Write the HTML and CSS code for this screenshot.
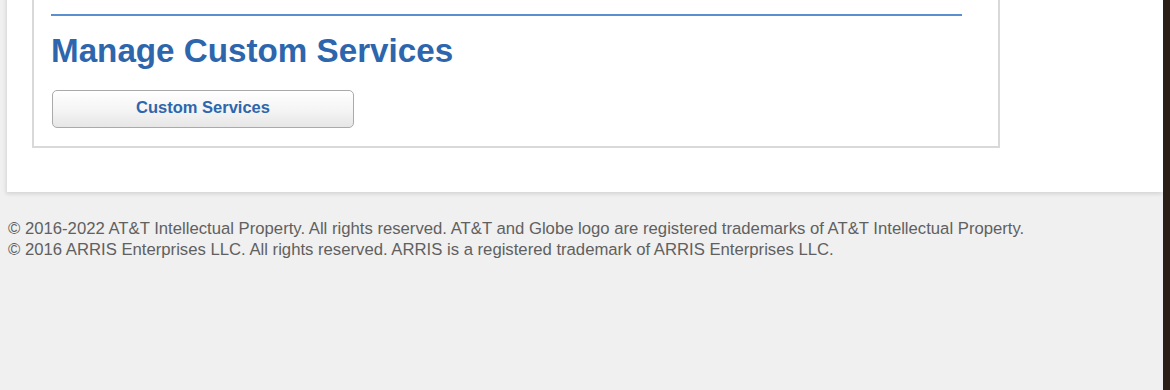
FILE: index.html
```html
<!DOCTYPE html>
<html>
<head>
    <title>Manage Custom Services</title>
    <link rel="stylesheet" href="styles.css">
</head>
<body>

    <div class="page">
        <div class="panel">
            <div class="content-box">
                <hr class="rule">
                <h2>Manage Custom Services</h2>
                <button type="button" class="btn">Custom Services</button>
            </div>
        </div>

        <div class="footer">
            <p>&copy; 2016-2022 AT&amp;T Intellectual Property. All rights reserved. AT&amp;T and Globe logo are registered trademarks of AT&amp;T Intellectual Property.</p>
            <p>&copy; 2016 ARRIS Enterprises LLC. All rights reserved. ARRIS is a registered trademark of ARRIS Enterprises LLC.</p>
        </div>
    </div>
    <div class="edge"></div>

</body>
</html>
```

FILE: styles.css
```css
html, body {
    height: 100%;
}

body {
    margin: 0;
    display: flex;
    font-family: 'Liberation Sans', Arial, Helvetica, sans-serif;
    background: #2b1e16;
    overflow: hidden;
}

.page {
    flex: 0 0 1163px;
    background: #f0f0f0;
}

.edge {
    flex: 1;
    background: #2b1e16;
}

.panel {
    margin: -40px 0 0 7px;
    padding: 0 0 44px 25px;
    background: #fff;
    box-shadow: -1px 2px 4px rgba(0, 0, 0, 0.12);
}

.content-box {
    width: 930px;
    padding: 52px 17px 18px 17px;
    border: 2px solid #d9d9d9;
}

.rule {
    width: 911px;
    margin: 0;
    border: none;
    border-top: 2px solid #5a8fd0;
}

.content-box h2 {
    margin: 16px 0 20px 0;
    font-size: 33.2px;
    line-height: 38px;
    color: #2d66ac;
}

.btn {
    display: block;
    width: 302px;
    height: 38px;
    margin-left: 1px;
    padding: 0 0 3px 0;
    border: 1px solid #aaa;
    border-radius: 5px;
    background: linear-gradient(#ffffff, #f4f4f4 55%, #e6e6e6);
    font-family: 'Liberation Sans', Arial, Helvetica, sans-serif;
    font-size: 16.5px;
    font-weight: bold;
    color: #2d66ac;
    cursor: pointer;
}

.footer {
    margin-top: 26px;
    padding-left: 8px;
    font-size: 16.7px;
    line-height: 21px;
    color: #606060;
}

.footer p {
    margin: 0;
}
```
